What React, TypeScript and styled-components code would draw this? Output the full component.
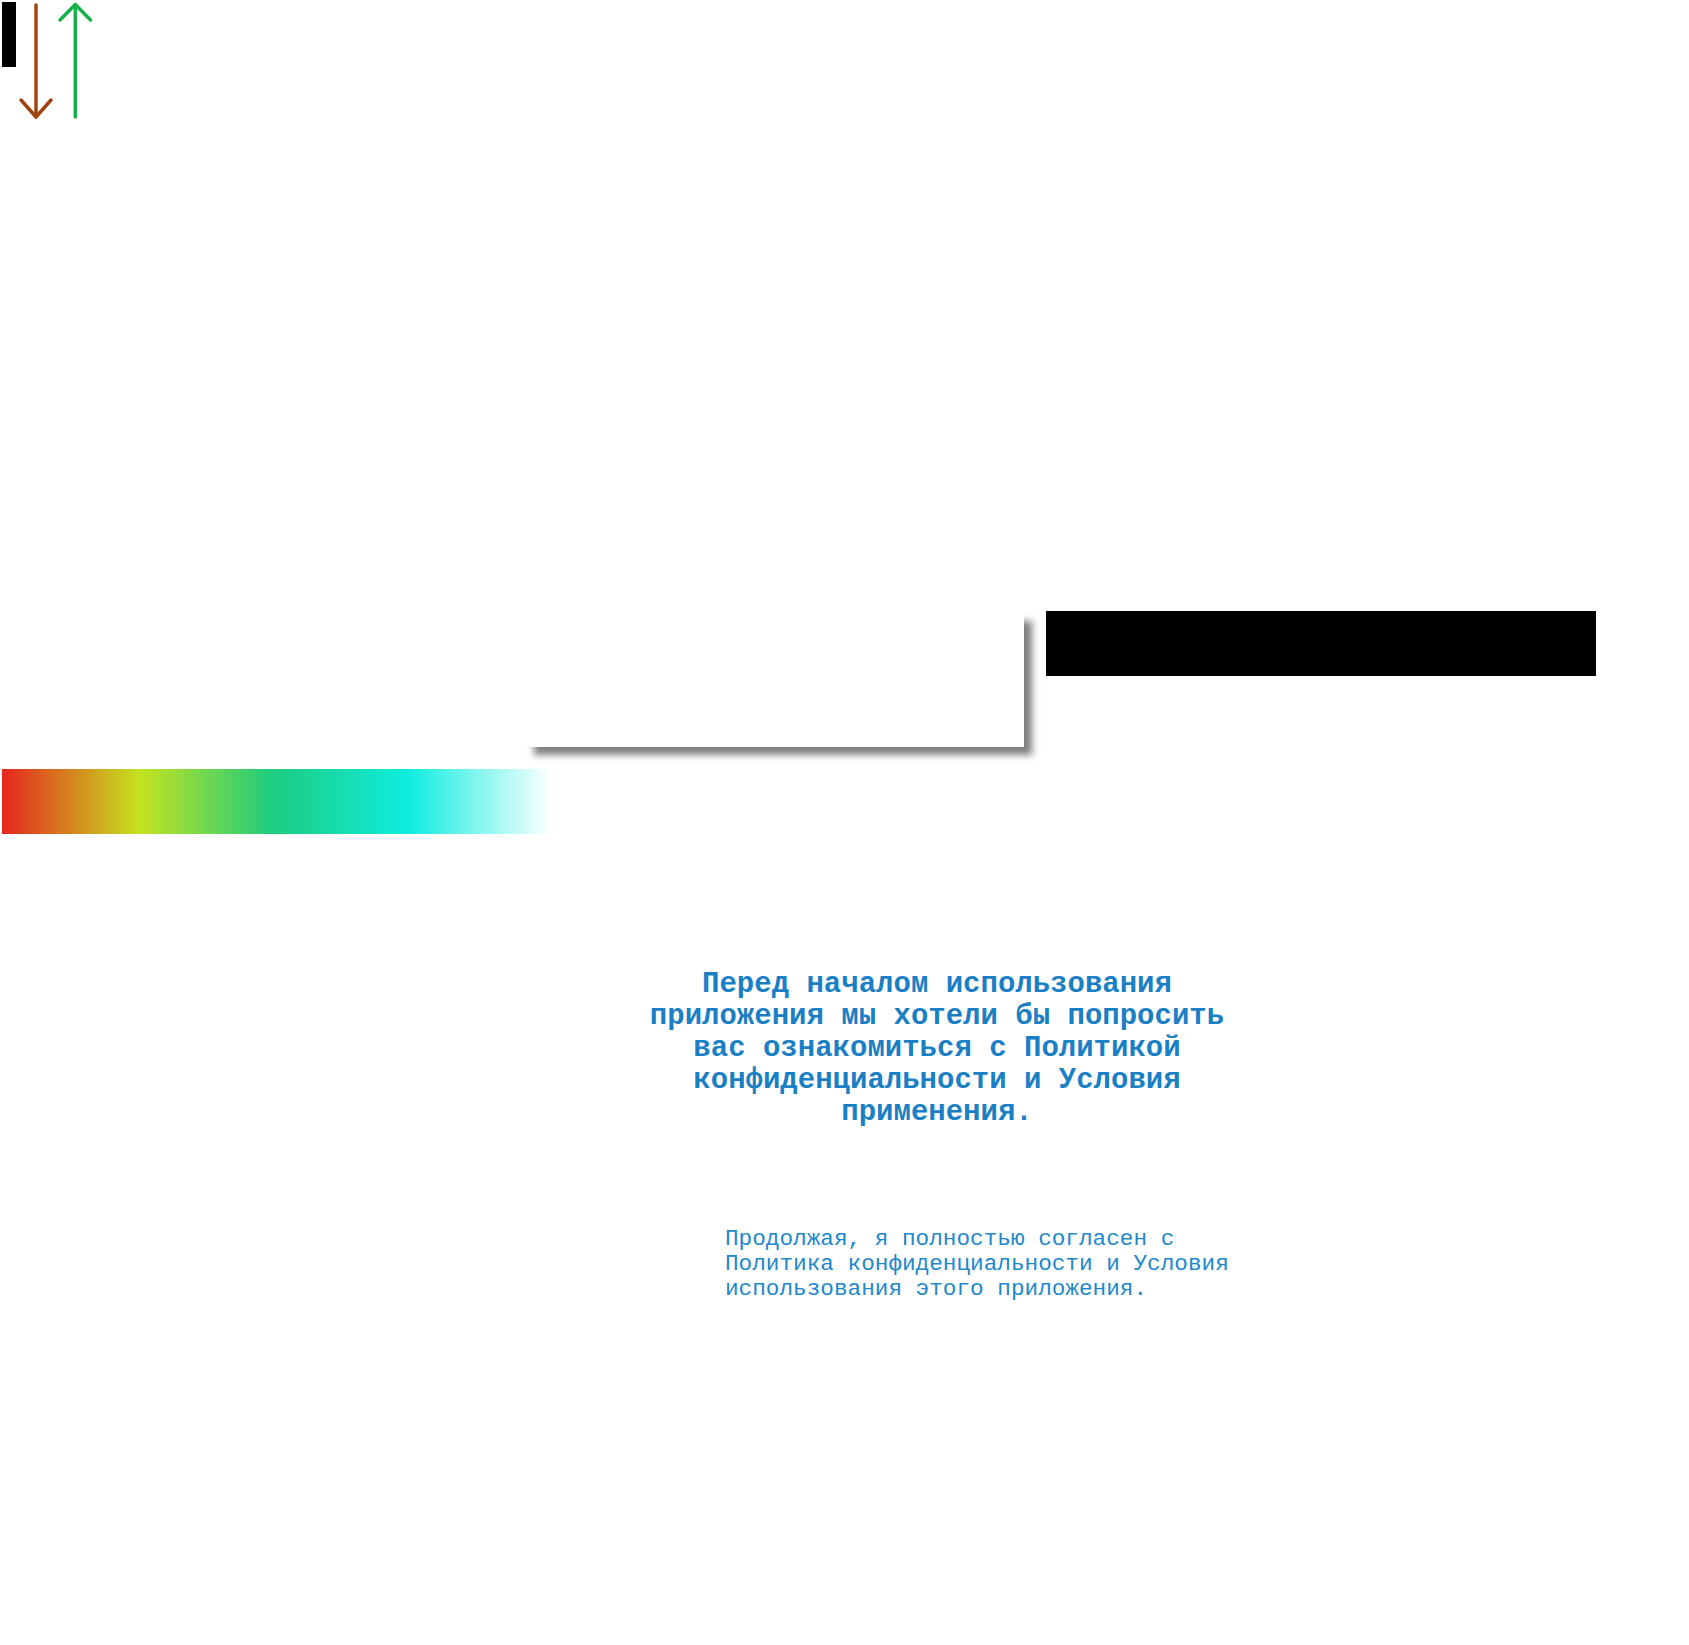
import styled, { createGlobalStyle } from "styled-components";

const GlobalStyle = createGlobalStyle`
  html, body {
    margin: 0;
    padding: 0;
    background: #ffffff;
  }
  body {
    font-family: "Liberation Mono", "DejaVu Sans Mono", monospace;
  }
`;

const Page = styled.div`
  padding: 2px;
  min-height: 1641px;
`;

const TopRow = styled.div`
  display: flex;
  align-items: flex-start;
  height: 120px;
`;

const Strip = styled.div`
  width: 14px;
  height: 65px;
  background: #000000;
`;

const Arrows = styled.svg`
  display: block;
  overflow: visible;
`;

const CardRow = styled.div`
  display: flex;
  align-items: flex-start;
  margin-top: 489px;
`;

const ShadowCard = styled.div`
  width: 498px;
  height: 134px;
  margin: 2px 0 0 524px;
  background: #ffffff;
  box-shadow: 8px 8px 7px rgba(0, 0, 0, 0.5);
`;

const Bar = styled.div`
  width: 550px;
  height: 65px;
  margin-left: 22px;
  background: #000000;
`;

const Spectrum = styled.div`
  width: 550px;
  height: 65px;
  margin-top: 22px;
  background: linear-gradient(
    to right,
    #e5261f 0%,
    #c5e31f 25%,
    #1dcc7e 49%,
    #10ede0 74%,
    #ffffff 100%
  );
`;

const Heading = styled.h1`
  width: 600px;
  margin: 135px 0 0 635px;
  font-size: 29px;
  line-height: 32px;
  font-weight: 700;
  text-align: center;
  color: #1a7fc4;
`;

const Consent = styled.p`
  width: 530px;
  margin: 98px 0 0 723px;
  font-size: 22.7px;
  line-height: 25px;
  font-weight: 400;
  color: #2188cc;
`;

export default function App() {
  return (
    <>
      <GlobalStyle />
      <Page>
        <TopRow>
          <Strip />
          <Arrows width="80" height="120" viewBox="0 0 80 120">
            <g
              fill="none"
              stroke="#a3430f"
              strokeWidth="3.5"
              strokeLinecap="round"
              strokeLinejoin="round"
            >
              <path d="M20 3 L20 115" />
              <path d="M5 98 L20 115 L35 98" />
            </g>
            <g
              fill="none"
              stroke="#18b04a"
              strokeWidth="3.5"
              strokeLinecap="round"
              strokeLinejoin="round"
            >
              <path d="M59.3 3 L59.3 115" />
              <path d="M44 18 L59.3 2.5 L74.5 18" />
            </g>
          </Arrows>
        </TopRow>

        <CardRow>
          <ShadowCard />
          <Bar />
        </CardRow>

        <Spectrum />

        <Heading>
          Перед началом использования приложения мы хотели бы попросить вас
          ознакомиться с Политикой конфиденциальности и Условия применения.
        </Heading>

        <Consent>
          Продолжая, я полностью согласен с Политика конфиденциальности и
          Условия использования этого приложения.
        </Consent>
      </Page>
    </>
  );
}
